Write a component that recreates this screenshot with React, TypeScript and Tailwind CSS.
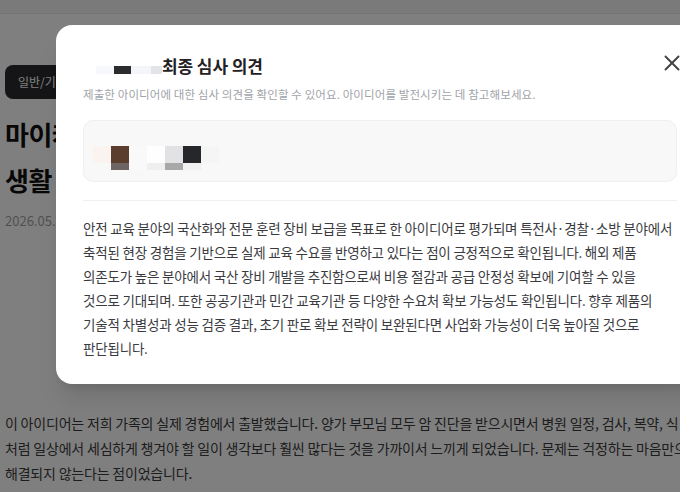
import { X } from "lucide-react";

const font = { fontFamily: '"Noto Sans CJK KR", "Noto Sans", sans-serif' };

const bodyLines = [
  "안전 교육 분야의 국산화와 전문 훈련 장비 보급을 목표로 한 아이디어로 평가되며 특전사·경찰·소방 분야에서",
  "축적된 현장 경험을 기반으로 실제 교육 수요를 반영하고 있다는 점이 긍정적으로 확인됩니다. 해외 제품",
  "의존도가 높은 분야에서 국산 장비 개발을 추진함으로써 비용 절감과 공급 안정성 확보에 기여할 수 있을",
  "것으로 기대되며. 또한 공공기관과 민간 교육기관 등 다양한 수요처 확보 가능성도 확인됩니다. 향후 제품의",
  "기술적 차별성과 성능 검증 결과, 초기 판로 확보 전략이 보완된다면 사업화 가능성이 더욱 높아질 것으로",
  "판단됩니다.",
];

const pageLines = [
  "이 아이디어는 저희 가족의 실제 경험에서 출발했습니다. 양가 부모님 모두 암 진단을 받으시면서 병원 일정, 검사, 복약, 식",
  "처럼 일상에서 세심하게 챙겨야 할 일이 생각보다 훨씬 많다는 것을 가까이서 느끼게 되었습니다. 문제는 걱정하는 마음만으",
  "해결되지 않는다는 점이었습니다.",
];

function Mosaic({ cols }: { cols: { top: string; bottom?: string }[] }) {
  return (
    <div className="flex">
      {cols.map((c, i) => (
        <div key={i} className="flex flex-col w-[18px]">
          <div className="h-[17px]" style={{ background: c.top }} />
          <div className="h-[7px]" style={{ background: c.bottom ?? c.top }} />
        </div>
      ))}
    </div>
  );
}

export default function App() {
  return (
    <div className="relative w-[680px] h-[492px] overflow-hidden bg-white" style={font}>
      {/* page underneath */}
      <div className="h-[14px] bg-[#f4f4f4] border-b border-[#e8e8e8]" />
      <div className="pl-[5px] pt-[51px]">
        <div className="inline-flex items-center h-[34px] px-[13px] rounded-lg bg-[#2a2a2e] text-white text-[12px]">
          일반/기술 아이디어
        </div>
        <h1 className="mt-[12px] text-[26px] font-bold leading-[46px] text-[#111] tracking-[-0.5px]">
          마이케어 플랜
          <br />
          생활 속 건강 관리 도우미
        </h1>
        <div className="mt-[8px] text-[13px] text-[#a3a3a3]">2026.05.12</div>
        <div className="mt-[180px] text-[14px] leading-[25px] text-[#3a3a3a] tracking-[-0.2px] whitespace-nowrap">
          {pageLines.map((l, i) => (
            <div key={i}>{l}</div>
          ))}
        </div>
      </div>

      {/* overlay */}
      <div className="absolute inset-0 bg-black/50" />

      {/* modal */}
      <div className="absolute left-[56px] top-[25px] w-[648px] bg-white rounded-2xl shadow-xl px-[27px] pt-[29px] pb-[24px]">
        <div className="flex items-center justify-between h-[24px]">
          <div className="flex items-end">
            <div className="flex h-[8px] mb-[4px] w-[79px]">
              <div className="w-[13px] bg-white" />
              <div className="w-[18px] bg-[#f6f8fb]" />
              <div className="w-[17px] bg-[#2a2c2e]" />
              <div className="w-[20px] bg-[#f3f5f8]" />
              <div className="w-[11px] bg-[#e3e4e8]" />
            </div>
            <h2 className="text-[17px] font-bold text-[#1f2125] leading-[24px] tracking-[-0.1px]">
              최종 심사 의견
            </h2>
          </div>
          <X size={26} strokeWidth={1.8} className="text-[#454545] -mr-[8px] -mt-[6px]" />
        </div>
        <p className="mt-[8px] text-[11.5px] leading-[16px] text-[#a0a3a8] tracking-[0.1px]">
          제출한 아이디어에 대한 심사 의견을 확인할 수 있어요. 아이디어를 발전시키는 데 참고해보세요.
        </p>
        <div className="mt-[18px] h-[62px] rounded-[10px] bg-[#f8f8f8] border border-[#f0f0f0] pl-[9px] pt-[25px]">
          <Mosaic
            cols={[
              { top: "#fbf3f0", bottom: "#f8f8f8" },
              { top: "#5b3d2d", bottom: "#6e6463" },
              { top: "#f9f9f9" },
              { top: "#fefefe", bottom: "#efefef" },
              { top: "#e2e2e4", bottom: "#a8a8a8" },
              { top: "#26272a", bottom: "#f0f0f0" },
              { top: "#f5f5f5", bottom: "#f8f8f8" },
            ]}
          />
        </div>
        <div className="mt-[18px] h-px bg-[#efefef]" />
        <div className="mt-[15px] text-[13.5px] leading-[24px] text-[#3b3b3f] tracking-[-0.2px] whitespace-nowrap">
          {bodyLines.map((l, i) => (
            <div key={i}>{l}</div>
          ))}
        </div>
      </div>
    </div>
  );
}
